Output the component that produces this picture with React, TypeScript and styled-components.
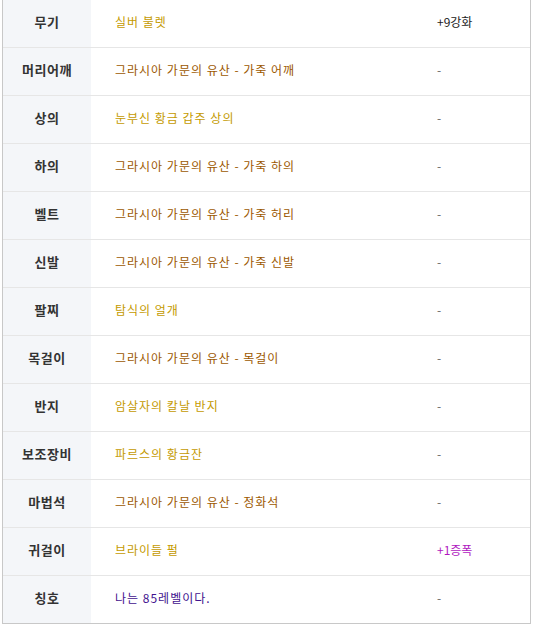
import React from "react";
import styled, { createGlobalStyle } from "styled-components";

const Global = createGlobalStyle`
  html, body { margin: 0; padding: 0; background: #ffffff; }
  body { font-family: "Noto Sans CJK KR", "Liberation Sans", sans-serif; }
`;

type Tone = "epic" | "legend" | "rare";

const toneColor: Record<Tone, string> = {
  epic: "#c49a00",
  legend: "#9c5800",
  rare: "#42128e",
};

type Extra = "none" | "reinforce" | "amplify";

const extraColor: Record<Extra, string> = {
  none: "#666666",
  reinforce: "#222222",
  amplify: "#b018c0",
};

const Wrap = styled.div`
  margin: -1px 0 0 2px;
  width: 529px;
  border-left: 1px solid #c8c8c8;
  border-right: 1px solid #c8c8c8;
  border-bottom: 1px solid #c8c8c8;
  box-sizing: border-box;
`;

const Row = styled.div`
  display: grid;
  grid-template-columns: 88px 321px 1fr;
  height: 48px;
  border-top: 1px solid #e6e6e6;
  box-sizing: border-box;
  &:first-child { border-top: 1px solid transparent; }
`;

const Label = styled.div`
  background: #f4f6f9;
  display: flex;
  align-items: center;
  justify-content: center;
  font-size: 13px;
  font-weight: 700;
  letter-spacing: 0.5px;
  color: #333333;
  padding-bottom: 5px;
`;

const Name = styled.div<{ $tone: Tone }>`
  display: flex;
  align-items: center;
  padding-left: 24px;
  padding-bottom: 5px;
  font-size: 12px;
  letter-spacing: 1px;
  color: ${(p) => toneColor[p.$tone]};
`;

const ExtraCell = styled.div<{ $kind: Extra }>`
  display: flex;
  align-items: center;
  padding-left: 25px;
  padding-bottom: 5px;
  font-size: 12px;
  color: ${(p) => extraColor[p.$kind]};
`;

const rows: { label: string; name: string; tone: Tone; extra: string; kind: Extra }[] = [
  { label: "무기", name: "실버 불렛", tone: "epic", extra: "+9강화", kind: "reinforce" },
  { label: "머리어깨", name: "그라시아 가문의 유산 - 가죽 어깨", tone: "legend", extra: "-", kind: "none" },
  { label: "상의", name: "눈부신 황금 갑주 상의", tone: "epic", extra: "-", kind: "none" },
  { label: "하의", name: "그라시아 가문의 유산 - 가죽 하의", tone: "legend", extra: "-", kind: "none" },
  { label: "벨트", name: "그라시아 가문의 유산 - 가죽 허리", tone: "legend", extra: "-", kind: "none" },
  { label: "신발", name: "그라시아 가문의 유산 - 가죽 신발", tone: "legend", extra: "-", kind: "none" },
  { label: "팔찌", name: "탐식의 얼개", tone: "epic", extra: "-", kind: "none" },
  { label: "목걸이", name: "그라시아 가문의 유산 - 목걸이", tone: "legend", extra: "-", kind: "none" },
  { label: "반지", name: "암살자의 칼날 반지", tone: "epic", extra: "-", kind: "none" },
  { label: "보조장비", name: "파르스의 황금잔", tone: "epic", extra: "-", kind: "none" },
  { label: "마법석", name: "그라시아 가문의 유산 - 정화석", tone: "legend", extra: "-", kind: "none" },
  { label: "귀걸이", name: "브라이들 펄", tone: "epic", extra: "+1증폭", kind: "amplify" },
  { label: "칭호", name: "나는 85레벨이다.", tone: "rare", extra: "-", kind: "none" },
];

export default function App() {
  return (
    <>
      <Global />
      <Wrap>
        {rows.map((r) => (
          <Row key={r.label}>
            <Label>{r.label}</Label>
            <Name $tone={r.tone}>{r.name}</Name>
            <ExtraCell $kind={r.kind}>{r.extra}</ExtraCell>
          </Row>
        ))}
      </Wrap>
    </>
  );
}
